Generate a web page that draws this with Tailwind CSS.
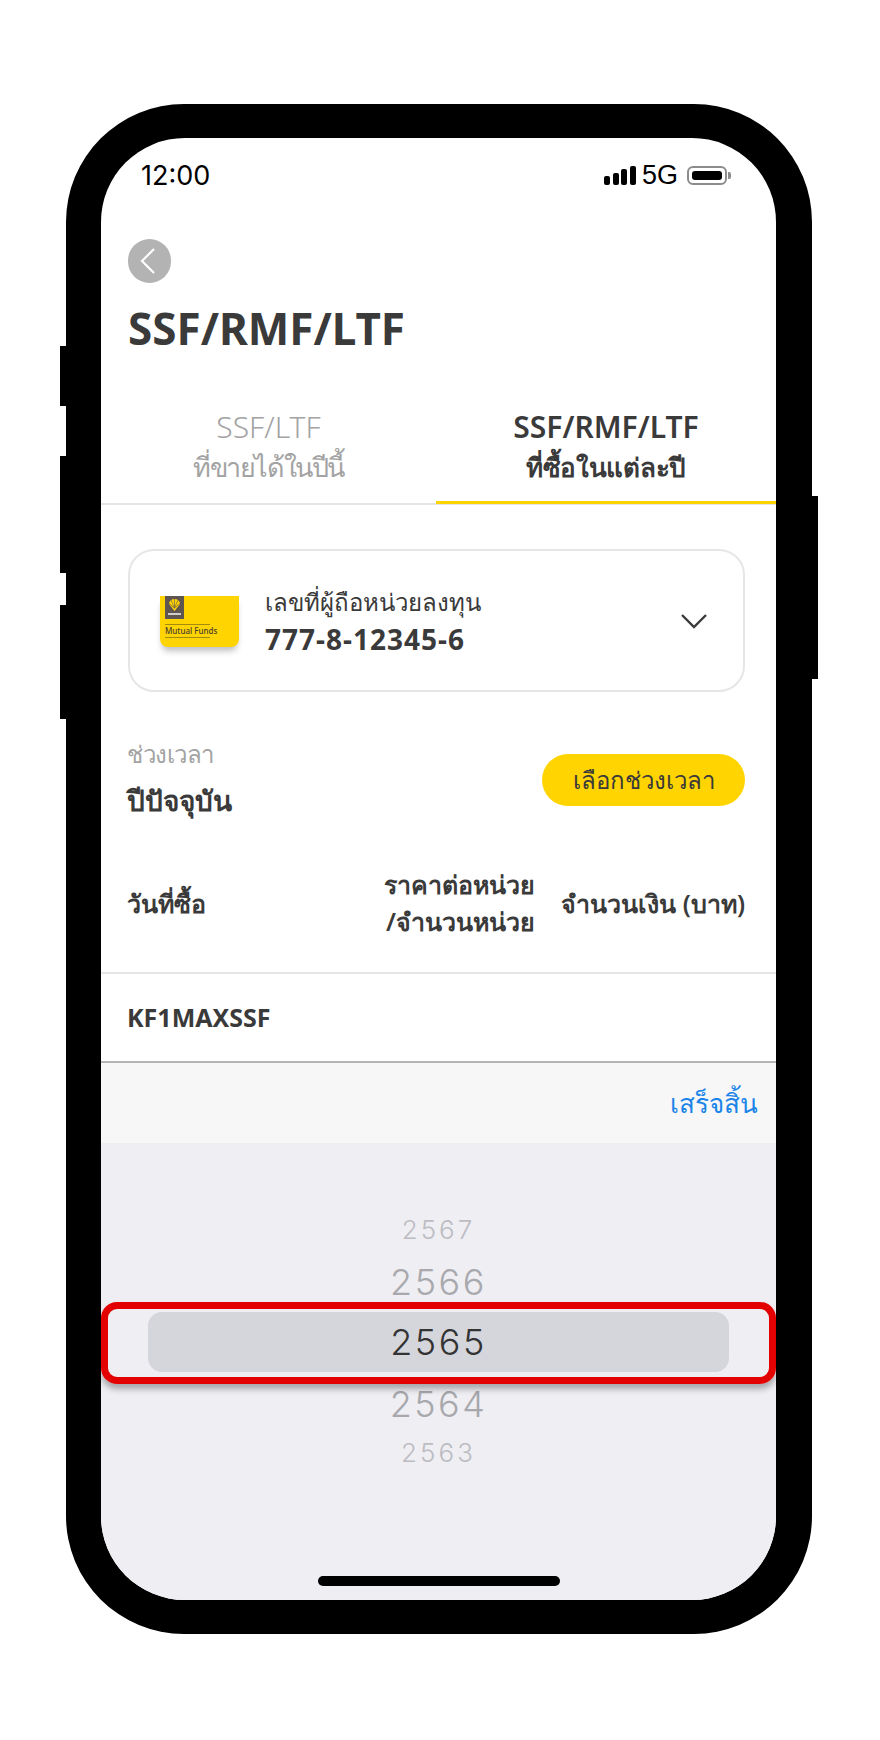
<!DOCTYPE html>
<html lang="th">
<head>
    <meta charset="UTF-8">
    <title>SSF/RMF/LTF</title>
    <script src="https://cdn.jsdelivr.net/npm/@tailwindcss/browser@4"></script>
</head>
<body class="bg-white font-['Noto_Sans',sans-serif]">
    <div class="w-[880px] h-[1740px] pt-[104px] pl-[66px]">
        <!-- phone -->
        <div class="relative w-[746px] h-[1530px] box-border bg-black border-l-[35px] border-r-[36px] border-y-[34px] border-black rounded-[118px]">
            <!-- side buttons -->
            <div class="absolute left-[-41px] top-[208px] w-[6px] h-[60px] bg-black"></div>
            <div class="absolute left-[-41px] top-[318px] w-[6px] h-[117px] bg-black"></div>
            <div class="absolute left-[-41px] top-[467px] w-[6px] h-[114px] bg-black"></div>
            <div class="absolute right-[-42px] top-[358px] w-[6px] h-[183px] bg-black"></div>

            <div class="flex flex-col w-full h-full overflow-hidden rounded-[84px] bg-white">
                <!-- status bar -->
                <div class="flex items-center justify-between h-[74px] shrink-0 pl-[40px] pr-[45px]">
                    <span class="font-['Inter',sans-serif] text-[27px] leading-none text-black">12:00</span>
                    <div class="flex items-center">
                        <div class="flex items-end gap-[2.5px] h-[19px]">
                            <div class="w-[6px] h-[9px] bg-black rounded-[2px]"></div>
                            <div class="w-[6px] h-[12px] bg-black rounded-[2px]"></div>
                            <div class="w-[6px] h-[16px] bg-black rounded-[2px]"></div>
                            <div class="w-[6px] h-[19px] bg-black rounded-[2px]"></div>
                        </div>
                        <span class="ml-[6px] font-['Liberation_Sans',sans-serif] text-[27px] leading-none text-black">5G</span>
                        <div class="ml-[9px] flex items-center">
                            <div class="w-[40px] h-[19px] p-[3px] border-2 border-[#8c8c8c] rounded-[6px]">
                                <div class="w-full h-full bg-black rounded-[3px]"></div>
                            </div>
                            <div class="ml-[1px] w-[3px] h-[7px] bg-[#8c8c8c] rounded-r-[2px]"></div>
                        </div>
                    </div>
                </div>

                <!-- back + title -->
                <div class="mt-[27px] ml-[27px] w-[43px] h-[44px] shrink-0 flex items-center justify-center rounded-full bg-[#b3b3b3]">
                    <svg width="16" height="28" viewBox="0 0 16 28" fill="none" stroke="white" stroke-width="2.2" class="mr-[3px]"><path d="M14 2 L2 14 L14 26"/></svg>
                </div>
                <h1 class="h-[92px] shrink-0 pl-[27px] pt-[15px] text-[44px] leading-[60px] font-bold text-[#3a3a3a]">SSF/RMF/LTF</h1>

                <!-- tabs -->
                <div class="grid grid-cols-[335px_340px] h-[130px] shrink-0 border-b-2 border-[#e5e5e5]">
                    <div class="pt-[32px] text-center leading-[40px] text-[#a3a3a3]">
                        <div class="text-[30px] font-light">SSF/LTF</div>
                        <div class="text-[27px] tracking-[-1.4px]">ที่ขายได้ในปีนี้</div>
                    </div>
                    <div class="h-[129px] pt-[32px] text-center leading-[40px] font-semibold text-[#3a3a3a] border-b-[3px] border-[#ffd400]">
                        <div class="text-[30px]">SSF/RMF/LTF</div>
                        <div class="text-[26px] tracking-[-0.3px]">ที่ซื้อในแต่ละปี</div>
                    </div>
                </div>

                <!-- account card -->
                <div class="mt-[44px] ml-[27px] mr-[31px] h-[143px] shrink-0 flex items-center pl-[30px] pr-[35px] border-2 border-[#e6e6e6] rounded-[26px]">
                    <div class="w-[79px] h-[51px] shrink-0 bg-[#ffd400] rounded-b-[8px] shadow-[0_6px_6px_-2px_rgba(0,0,0,0.25)] pl-[5px] mt-[2px]">
                        <div class="flex flex-col items-center w-[19px] h-[23px] bg-[#5f5550]">
                            <svg width="13" height="12" viewBox="0 0 13 12" class="mt-[3px]"><path d="M1 5 A5.5 5 0 0 1 12 5 L6.5 12 Z" fill="#ffd400"/><path d="M6.5 0V9M3 1L6.5 9M10 1L6.5 9M1 4.5L6.5 9M12 4.5L6.5 9" stroke="#5f5550" stroke-width="0.6"/></svg>
                            <div class="mt-[2px] w-[13px] h-[2px] bg-white/70"></div>
                        </div>
                        <div class="mt-[5px] w-[45px] h-[14px] border-y border-[#a58a10] text-[8px] leading-[12px] font-medium whitespace-nowrap text-[#4a4030]">Mutual Funds</div>
                    </div>
                    <div class="ml-[26px] flex-1">
                        <div class="text-[24px] leading-[36px] text-[#3a3a3a]">เลขที่ผู้ถือหน่วยลงทุน</div>
                        <div class="text-[28px] leading-[38px] tracking-[1px] font-bold text-[#3a3a3a]">777-8-12345-6</div>
                    </div>
                    <svg width="28" height="16" viewBox="0 0 28 16" fill="none" stroke="#3a3a3a" stroke-width="2.4"><path d="M2 2 L14 14 L26 2"/></svg>
                </div>

                <!-- period -->
                <div class="mt-[44px] ml-[26px] mr-[31px] flex justify-between items-start shrink-0">
                    <div>
                        <div class="text-[24px] tracking-[-0.5px] leading-[36px] text-[#a3a3a3]">ช่วงเวลา</div>
                        <div class="mt-[10px] text-[28px] leading-[36px] font-semibold text-[#3a3a3a]">ปีปัจจุบัน</div>
                    </div>
                    <div class="mt-[18px] w-[203px] h-[52px] flex items-center justify-center rounded-full bg-[#ffd400] text-[24px] text-[#3a3a3a]">เลือกช่วงเวลา</div>
                </div>

                <!-- table head -->
                <div class="mt-[48px] pb-[32px] pl-[26px] pr-[31px] grid grid-cols-[1fr_auto_210px] items-center border-b-2 border-[#e6e6e6] shrink-0 text-[25px] leading-[37px] font-semibold text-[#3a3a3a]">
                    <div>วันที่ซื้อ</div>
                    <div class="text-right">ราคาต่อหน่วย<br>/จำนวนหน่วย</div>
                    <div class="text-right">จำนวนเงิน (บาท)</div>
                </div>

                <!-- fund row -->
                <div class="h-[89px] shrink-0 flex items-center pl-[26px] border-b-2 border-[#b5b5b5] text-[25px] font-bold text-[#3a3a3a]">KF1MAXSSF</div>

                <!-- picker toolbar -->
                <div class="h-[80px] shrink-0 flex items-center justify-end pr-[18px] bg-[#f7f7f7] text-[26px] text-[#1a84e8]">เสร็จสิ้น</div>

                <!-- year picker -->
                <div class="relative flex flex-col flex-1 pt-[67px] bg-[#eeeef3] font-['Inter',sans-serif] font-light text-center">
                    <div class="h-[40px] text-[26px] leading-[40px] tracking-[3px] text-[#bcbcc2]">2567</div>
                    <div class="mt-[5px] h-[54px] text-[36px] leading-[54px] tracking-[2.5px] text-[#a8a8ad]">2566</div>
                    <div class="mt-[3px] mx-[47px] h-[60px] rounded-[14px] bg-[#d5d5dc] text-[36px] leading-[60px] tracking-[2.5px] text-[#333333]">2565</div>
                    <div class="mt-[5px] h-[54px] text-[36px] leading-[54px] tracking-[2.5px] text-[#a8a8ad]">2564</div>
                    <div class="mt-[2px] h-[40px] text-[26px] leading-[40px] tracking-[3px] text-[#bcbcc2]">2563</div>
                    <div class="mt-auto mb-[14px] self-center w-[242px] h-[10px] rounded-full bg-black"></div>

                    <!-- red highlight -->
                    <div class="absolute left-0 right-0 top-[159px] h-[82px] border-[7px] border-[#e30000] rounded-[16px] shadow-[0_5px_6px_rgba(0,0,0,0.3)]"></div>
                </div>
            </div>
        </div>
    </div>
</body>
</html>
